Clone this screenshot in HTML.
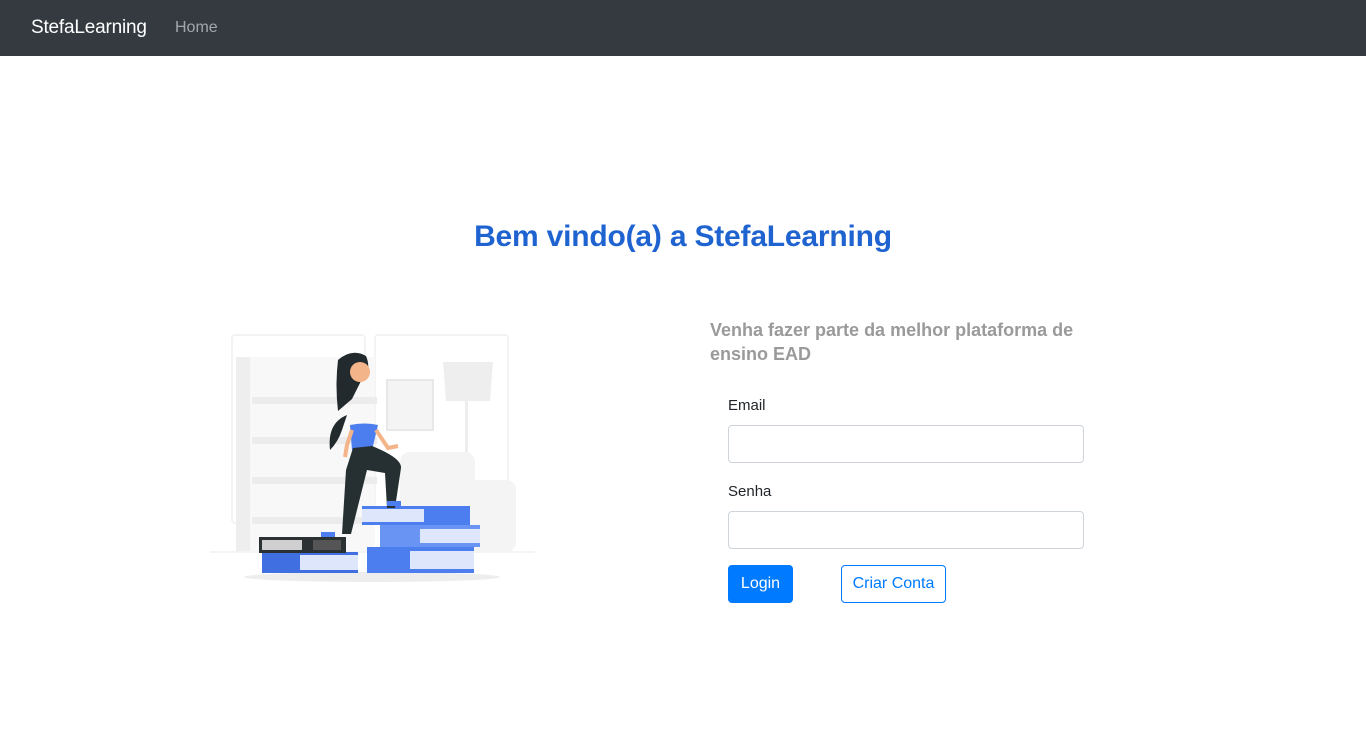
<!DOCTYPE html>
<html><head><meta charset="utf-8"><style>
*{box-sizing:border-box;margin:0;padding:0}
body{width:1366px;height:743px;background:#fff;font-family:"Liberation Sans",sans-serif;position:relative;overflow:hidden;color:#212529}
nav{height:56px;background:#343a40;position:relative}
.brand{position:absolute;left:31px;top:17px;color:#fff;font-size:19px;letter-spacing:-0.2px}
.home{position:absolute;left:175px;top:19px;color:rgba(255,255,255,.55);font-size:16px}
h1{position:absolute;top:220px;left:0;width:1366px;text-align:center;color:#1e63d0;font-size:30px;font-weight:bold;letter-spacing:-0.2px}
.sub{position:absolute;left:710px;top:318px;width:400px;color:#9a9a9a;font-weight:bold;font-size:18px;line-height:24px}
label{position:absolute;left:728px;font-size:15px}
.in{position:absolute;left:728px;width:356px;height:38px;border:1px solid #ced4da;border-radius:4px}
.btn{position:absolute;top:565px;height:38px;border-radius:4px;font-size:16px;line-height:38px;text-align:center}
</style></head><body>
<nav><div class="brand">StefaLearning</div><div class="home">Home</div></nav>
<h1>Bem vindo(a) a StefaLearning</h1>
<svg style="position:absolute;left:200px;top:320px" width="340" height="270" viewBox="0 0 340 270">
<rect x="32" y="15" width="133" height="188" rx="3" fill="none" stroke="#f3f3f3" stroke-width="2"/>
<rect x="175" y="15" width="133" height="188" rx="3" fill="none" stroke="#f3f3f3" stroke-width="2"/>
<rect x="36" y="37" width="14" height="195" fill="#eeeeee"/>
<rect x="50" y="37" width="125" height="195" fill="#f8f8f8"/>
<g fill="#ececec"><rect x="52" y="77" width="125" height="7"/><rect x="52" y="117" width="125" height="7"/><rect x="52" y="157" width="125" height="7"/><rect x="52" y="197" width="125" height="7"/></g>
<rect x="187" y="60" width="46" height="50" fill="#f4f4f4" stroke="#e8e8e8" stroke-width="2"/>
<path d="M243 42h50l-3 39h-44z" fill="#eeeeee"/><rect x="265" y="81" width="3" height="86" fill="#eeeeee"/>
<rect x="200" y="132" width="75" height="100" rx="10" fill="#f4f4f4"/><rect x="268" y="160" width="48" height="72" rx="10" fill="#f4f4f4"/>
<rect x="10" y="231" width="325" height="2" fill="#f4f4f4"/>
<ellipse cx="172" cy="257" rx="128" ry="5" fill="#ededed"/>
<rect x="62" y="232" width="96" height="21" fill="#3f6fe0"/><rect x="100" y="235" width="58" height="15" fill="#dde6fb"/>
<rect x="59" y="217" width="87" height="16" fill="#2b3032"/><rect x="62" y="220" width="40" height="10" fill="#cfcfcf"/><rect x="113" y="220" width="28" height="10" fill="#555"/>
<rect x="167" y="227" width="107" height="26" fill="#4d7ef0"/><rect x="210" y="231" width="64" height="18" fill="#dde6fb"/>
<rect x="180" y="205" width="100" height="22" fill="#6a94f3"/><rect x="220" y="209" width="60" height="14" fill="#dde6fb"/>
<rect x="162" y="186" width="108" height="19" fill="#4d7ef0"/><rect x="162" y="189" width="62" height="13" fill="#dde6fb"/>
<path d="M147 95q-20 8-17 35 8-8 12-20z" fill="#232a2e"/>
<path d="M150 105q15-3 28 0 L172 130h-20z" fill="#4d7ef0"/>
<path d="M153 128l19-2q30 12 29 22l-6 40h-8l-2-35-18-3-16 64h-9l4-64z" fill="#263032"/>
<path d="M138 40q14-12 28-4 6 14-4 23l-10 20-14 12q-3-25 0-51z" fill="#232a2e"/>
<circle cx="160" cy="52" r="10" fill="#f3b48a"/>
<path d="M176 110l12 18 10-2" fill="none" stroke="#f3b48a" stroke-width="4"/>
<path d="M152 110l-5 15-2 12" fill="none" stroke="#f3b48a" stroke-width="4"/>
<rect x="121" y="212" width="14" height="5" fill="#4d7ef0"/><rect x="187" y="181" width="14" height="5" fill="#4d7ef0"/>
</svg>
<div class="sub">Venha fazer parte da melhor plataforma de ensino EAD</div>
<label style="top:397px">Email</label><div class="in" style="top:425px"></div>
<label style="top:483px">Senha</label><div class="in" style="top:511px"></div>
<div class="btn" style="left:728px;width:65px;background:#007bff;color:#fff">Login</div>
<div class="btn" style="left:841px;width:105px;border:1px solid #007bff;color:#007bff;line-height:36px">Criar Conta</div>
</body></html>
